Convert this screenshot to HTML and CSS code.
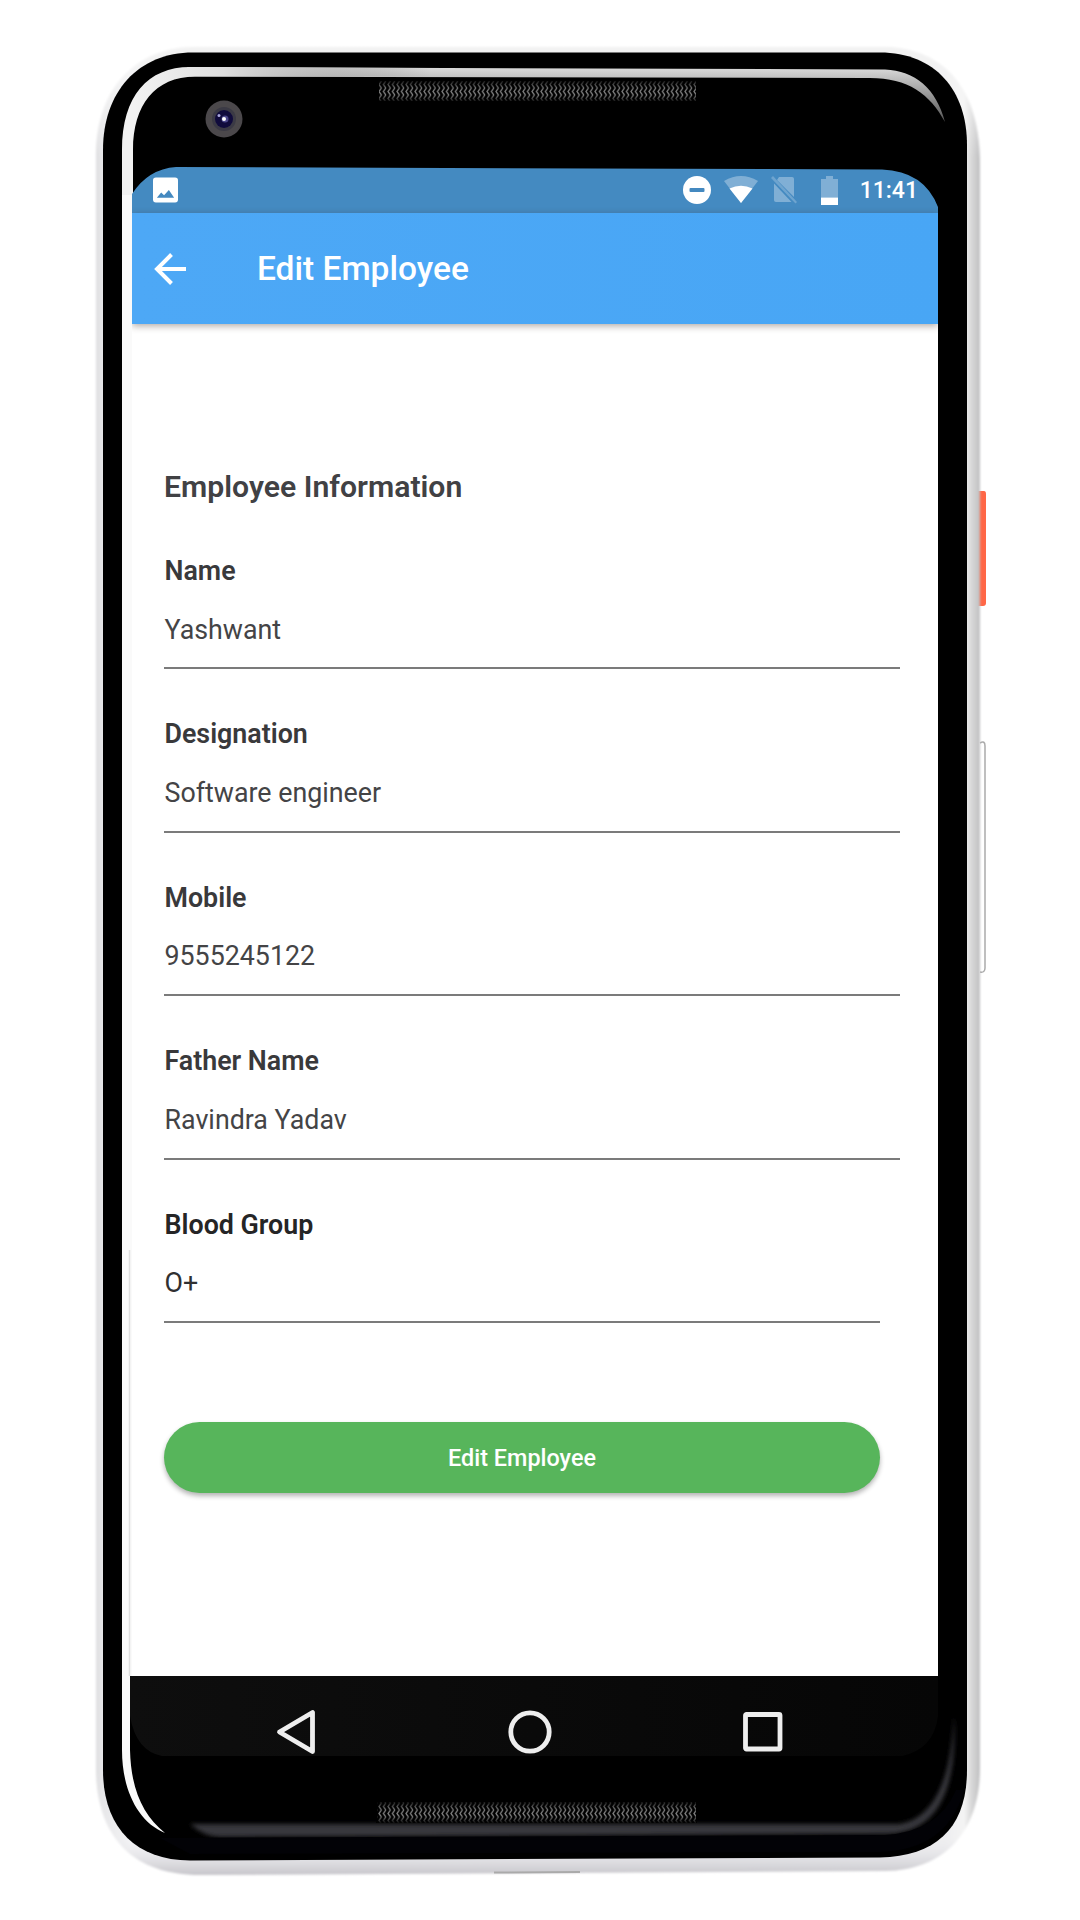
FILE: index.html
```html
<!DOCTYPE html>
<html lang="en">
<head>
<meta charset="utf-8">
<title>Edit Employee</title>
<link rel="stylesheet" href="styles.css">
</head>
<body>
<div class="stage">
  <svg class="device" width="1080" height="1920" viewBox="0 0 1080 1920" aria-hidden="true">
    <defs>
      <linearGradient id="shell" x1="0" x2="1" y1="0" y2="0">
        <stop offset="0" stop-color="#dedee0"/><stop offset=".006" stop-color="#e6e6e8"/>
        <stop offset=".04" stop-color="#f4f4f6"/><stop offset=".96" stop-color="#eeeef0"/>
        <stop offset=".982" stop-color="#f4f4f4"/><stop offset=".989" stop-color="#dcdcdc"/><stop offset="1" stop-color="#bfbfc1"/>
      </linearGradient>
      <linearGradient id="shellBase" x1="0" x2="0" y1="0" y2="1">
        <stop offset="0" stop-color="#f2f2f2"/><stop offset=".06" stop-color="#fafafa" stop-opacity="0"/>
        <stop offset=".98" stop-color="#e8e8ec" stop-opacity="0"/><stop offset="1" stop-color="#c6c5ca"/>
      </linearGradient>
      <linearGradient id="rimTop" x1="0" x2="0" y1="0" y2="1">
        <stop offset="0" stop-color="#dcdcdc"/><stop offset="1" stop-color="#555"/>
      </linearGradient>
      <linearGradient id="rimLeft" gradientUnits="userSpaceOnUse" x1="135" x2="430" y1="0" y2="0">
        <stop offset="0" stop-color="#f2f2f2"/><stop offset=".3" stop-color="#dedede"/><stop offset="1" stop-color="#777" stop-opacity="0"/>
      </linearGradient>
      <linearGradient id="meshShade" x1="0" x2="0" y1="0" y2="1">
        <stop offset="0" stop-color="#000" stop-opacity=".9"/><stop offset=".35" stop-color="#000" stop-opacity=".25"/>
        <stop offset=".65" stop-color="#000" stop-opacity=".1"/><stop offset="1" stop-color="#000" stop-opacity=".9"/>
      </linearGradient>
      <pattern id="mesh" x="0" y="81" width="4.500" height="7" patternUnits="userSpaceOnUse">
        <path d="M3.400 0L1 3.500L3.400 7" fill="none" stroke="#a2a2a2" stroke-width="1.300"/>
      </pattern>
      <filter id="soft" x="-10%" y="-60%" width="120%" height="220%"><feGaussianBlur stdDeviation="2"/></filter>
      <filter id="edge" x="-5%" y="-5%" width="110%" height="110%"><feGaussianBlur stdDeviation=".8"/></filter>
    </defs>
    <path class="power" d="M977 491h7q2 0 2 3v109q0 3-3 3h-6z"/>
    <path class="volume" d="M980 743q5-3 5 3v222q0 5-5 4"/>
    <g filter="url(#edge)">
      <path d="M195 47H885C946 49 980 90 980 165V1768C980 1830 946 1870 885 1871L200 1875C132 1875 96 1836 96 1768V155C96 90 135 47 195 47Z" fill="url(#shell)"/>
      <path d="M195 47H885C946 49 980 90 980 165V1768C980 1830 946 1870 885 1871L200 1875C132 1875 96 1836 96 1768V155C96 90 135 47 195 47Z" fill="url(#shellBase)"/>
    </g>
    <path d="M193 52.500H880C935 52.500 967 90 967 145V1770C967 1826 938 1856 880 1857.500L190 1860.500C133 1860 103 1825 103 1770V150C103 92 138 52.500 193 52.500Z" fill="#000"/>
    <path d="M187 67L885 69.500C915 71 936 88 945 122C930 94 908 78 870 78L190 76.500Z" fill="url(#rimTop)"/>
    <path d="M122 150C122 96 148 67 190 67H430V76.500H195C155 77 133 105 133 150V195L133 600L130 1676V1750H122Z" fill="url(#rimLeft)"/>
    <path d="M122 195H133.500V1676H130V1750C131 1790 143 1815 165 1833C138 1822 122 1790 122 1750Z" fill="#fafafa"/>
    <path d="M129.500 1250V1676" stroke="#dedede" stroke-width="1.500"/>
    <path d="M190 1824H900Q950 1815 954 1715Q960 1834 885 1834L220 1837Q205 1837 190 1824Z" fill="#39383d" filter="url(#soft)"/>
    <path d="M160 1838L885 1835Q938 1832 956 1790L964 1790Q948 1850 880 1852L190 1854Z" fill="#020206"/>
    <rect x="379" y="81" width="317" height="20" fill="url(#mesh)"/>
    <rect x="378" y="80" width="319" height="22" fill="url(#meshShade)"/>
    <rect x="377" y="1802" width="319" height="21" fill="url(#mesh)"/>
    <rect x="376" y="1801" width="321" height="22" fill="url(#meshShade)"/>
    <circle cx="224" cy="119" r="18.500" fill="#4b484b"/>
    <circle cx="224" cy="119" r="12" fill="#3b3a45"/>
    <circle cx="224" cy="119" r="9" fill="#100b3c"/>
    <circle cx="225" cy="119" r="3.500" fill="#4b478a"/>
    <circle cx="224" cy="119" r="2" fill="#fff"/><circle cx="219" cy="115.500" r="1.500" fill="#aaa8dd"/>
    <path d="M494 1872.500L580 1872" stroke="#aaa" stroke-width="2"/>
  </svg>

  <main class="screen">
    <header class="statusbar">
      <svg class="si-photo" viewBox="0 0 26 26"><rect width="26" height="26" rx="3" fill="#fff"/><path d="M4 21L8.500 15.500L11.500 18.500L16.500 13L22 21Z" fill="#4489c0"/></svg>
      <div class="status-icons">
        <svg width="28" height="28" viewBox="0 0 28 28"><circle cx="14" cy="14" r="14" fill="#fff"/><rect x="6.500" y="12" width="15" height="4" rx="1" fill="#4489c0"/></svg>
        <svg class="si-wifi" width="34" height="28" viewBox="0 0 34 28"><path d="M0 5Q17-5 34 5L17 27Z" fill="#fff" opacity=".32"/><path d="M5.500 12.500Q17 7 28.500 12.500L17 27Z" fill="#fff"/></svg>
        <svg class="si-sim" width="26" height="28" viewBox="0 0 26 28"><g fill="#fff" opacity=".32"><path d="M8 1H21Q23 1 23 3V21L6 4Z"/><path d="M3 7.500L20.500 26H5Q3 26 3 24Z"/><path d="M2 0L26 26L24.500 27.500L0 2Z" opacity=".7"/></g></svg>
        <svg class="si-battery" width="17" height="29" viewBox="0 0 17 29"><path d="M5 0H12V3H17V21.500H0V3H5Z" fill="#fff" opacity=".32"/><path d="M0 21.500H17V29H0Z" fill="#fff"/></svg>
        <time class="clock">11:41</time>
      </div>
    </header>

    <div class="appbar">
      <svg class="back" width="32" height="32" viewBox="0 0 32 32"><path d="M32 16H3M17.500 1.500L3 16L17.500 30.500" fill="none" stroke="#fff" stroke-width="4"/></svg>
      <h1 class="title">Edit Employee</h1>
    </div>

    <form class="form">
      <h2 class="section">Employee Information</h2>
      <div class="field"><div class="label">Name</div><div class="value">Yashwant</div></div>
      <div class="field"><div class="label">Designation</div><div class="value">Software engineer</div></div>
      <div class="field"><div class="label">Mobile</div><div class="value">9555245122</div></div>
      <div class="field"><div class="label">Father Name</div><div class="value">Ravindra Yadav</div></div>
      <div class="field field-short"><div class="label">Blood Group</div><div class="value">O+</div></div>
      <button class="submit" type="button">Edit Employee</button>
    </form>

    <nav class="navbar">
      <svg width="46" height="46" viewBox="0 0 46 46"><path d="M38.500 3.500V42.500L5.500 23Z"/></svg>
      <svg width="46" height="46" viewBox="0 0 46 46"><circle cx="23" cy="23" r="19.200"/></svg>
      <svg width="46" height="46" viewBox="0 0 46 46"><rect x="5.500" y="5.500" width="34.500" height="34.500" rx="1"/></svg>
    </nav>
  </main>
</div>
</body>
</html>
```
FILE: styles.css
```css
* { box-sizing: border-box; margin: 0; }

body {
  background: #fff;
  font-family: Roboto, "Liberation Sans", sans-serif;
}

.stage {
  position: relative;
  width: 1080px;
  height: 1920px;
  padding: 167px 0 0 132px;
  overflow: hidden;
}

.device { position: absolute; left: 0; top: 0; }
.power { fill: #ff6747; }
.volume { fill: #fff; stroke: #aaa; stroke-width: 1.5; }

.screen {
  position: relative;
  display: flex;
  flex-direction: column;
  width: 806px;
  height: 1589px;
  clip-path: path("M0 27Q16 2 44 0L750 2.500Q792 4 806 40V1549Q802 1582 770 1589H30Q4 1584 -2 1549V1509H0Z");
}

.statusbar {
  display: flex;
  align-items: flex-start;
  justify-content: space-between;
  height: 46px;
  padding: 9px 20px 0 21px;
  background: #448ac1;
}
.si-photo { width: 25px; height: 26px; margin-top: 1px; }
.status-icons { display: flex; align-items: flex-start; }
.si-wifi { margin-left: 13px; }
.si-sim { margin-left: 13px; }
.si-battery { margin-left: 24px; }
.clock {
  margin-left: 22px;
  color: #fff;
  font-size: 23px;
  font-weight: 500;
  line-height: 29px;
}

.appbar {
  display: flex;
  align-items: center;
  height: 111px;
  padding: 0 22px;
  background: linear-gradient(90deg, #4da8f6, #48a6f5);
  box-shadow: 0 2px 7px rgba(60, 40, 30, .4);
  z-index: 1;
}
.title {
  margin-left: 71px;
  color: #fff;
  font-size: 33.500px;
  font-weight: 500;
  line-height: 40px;
}

.form { display: flex; flex-direction: column; height: 1352px; padding: 143px 38px 0 32px; background: #fff; }
.section { height: 40px; margin-bottom: 43px; color: #414144; font-size: 30.200px; font-weight: 600; line-height: 40px; }
.field { height: 119.400px; margin-bottom: 44px; border-bottom: 2px solid #7b7b7b; color: #39393b; font-size: 26.800px; }
.field-short { width: 716px; color: #252526; }
.label { height: 40px; padding: 1px 0 0 .5px; font-weight: 600; line-height: 40px; }
.value { margin-top: 19.600px; padding-left: .5px; color: #444446; line-height: 40px; }
.field-short .value { color: #303031; }
.submit {
  width: 716px;
  height: 71px;
  margin-top: 55px;
  border: 0;
  border-radius: 36px;
  background: #57b55b;
  box-shadow: 0 3px 5px rgba(0, 0, 0, .3);
  color: #fff;
  font: 500 23.400px/71px Roboto, sans-serif;
}

.navbar {
  display: flex;
  align-items: flex-start;
  justify-content: space-between;
  height: 80px;
  margin-left: -2px;
  padding: 33px 152px 0 144px;
  background: linear-gradient(90deg, #0e0e0e, #060606);
}
.navbar svg { fill: none; stroke: #eee; stroke-width: 4.800; stroke-linejoin: round; }
```
